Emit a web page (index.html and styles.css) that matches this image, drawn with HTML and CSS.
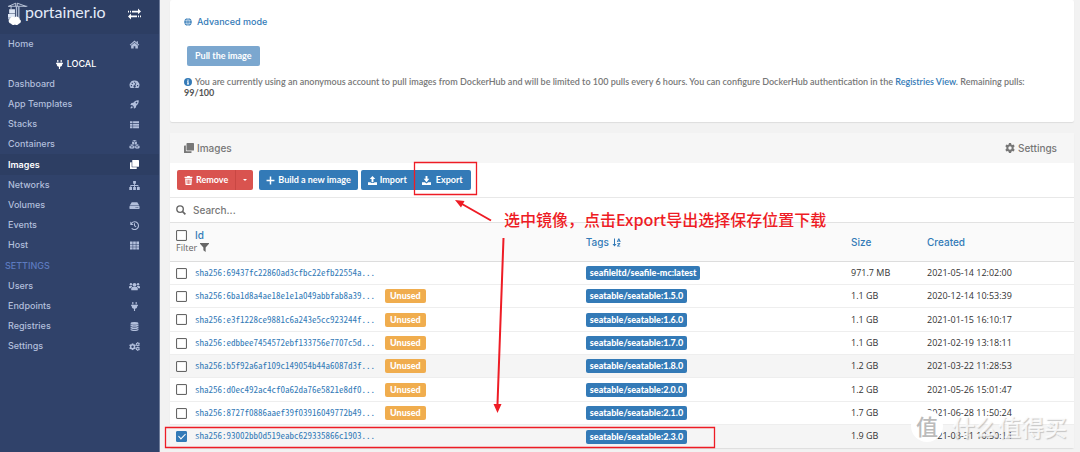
FILE: index.html
```html
<!DOCTYPE html>
<html lang="en">
<head>
<meta charset="utf-8">
<title>Portainer - Images</title>
<link rel="stylesheet" href="styles.css">
</head>
<body>
<svg class="sprite" aria-hidden="true">
  <symbol id="home" viewBox="0 0 18 16"><path d="M9 1 0.5 8.3l1.2 1.3L9 3.4l7.3 6.2 1.2-1.3L15 6.100V2h-2.200v2.300z"/><path d="M9 4.700 3 9.800V15h4.500v-4h3v4H15V9.800z"/></symbol>
  <symbol id="plug" viewBox="0 0 16 16"><path d="M4 0h2v4H4zM10 0h2v4h-2zM2 5h12v2h-1c0 3-1.500 4.600-4 5v4H7v-4C4.500 11.600 3 10 3 7H2z"/></symbol>
  <symbol id="gauge" viewBox="0 0 18 16"><path fill-rule="evenodd" d="M9 1a8 8 0 0 0-7 13h14A8 8 0 0 0 9 1zM8 3h2v2H8zM4 5h2v2H4zM2.500 9h2v2h-2zM13.500 9h2v2h-2zM11 4.500l1.300.500-1.800 5a2 2 0 1 1-1.400-.500z"/></symbol>
  <symbol id="rocket" viewBox="0 0 16 16"><path fill-rule="evenodd" d="M15.500.500C11 0 8 2 6 5L2.500 5.500.500 9l4 .500 2 2 .500 4 3.500-2L11 10c3-2 5-5 4.500-9.500zM11.500 3a1.500 1.500 0 1 1 0 3 1.500 1.500 0 0 1 0-3zM3.500 11C1.500 11.500 1 13 1 15c2 0 3.500-.500 4-2.500z"/></symbol>
  <symbol id="list" viewBox="0 0 16 16"><path d="M0 2h4.500v3.500H0zM5.500 2H16v3.500H5.500zM0 6.500h4.500V10H0zM5.500 6.500H16V10H5.500zM0 11h4.500v3.500H0zM5.500 11H16v3.500H5.500z"/></symbol>
  <symbol id="cubes" viewBox="0 0 18 16"><path d="M9 0 5 1.500 9 3l4-1.500zM4.700 2.500v4L8.500 8V4zM13.300 2.500v4L9.500 8V4zM4.500 7.500.500 9l4 1.600 4-1.600zM13.500 7.500l-4 1.500 4 1.600 4-1.600zM0 10v4l4 2v-4.400zM9 10v4l-4 2v-4.400zM10 10.500V14l3 2v-4.400zM18 10v4l-4 2v-4.400z"/></symbol>
  <symbol id="clone" viewBox="0 0 16 16"><path d="M5 0h10a1 1 0 0 1 1 1v10a1 1 0 0 1-1 1H5a1 1 0 0 1-1-1V1a1 1 0 0 1 1-1z"/><path d="M1 4h2v8a1 1 0 0 0 1 1h8v2a1 1 0 0 1-1 1H1a1 1 0 0 1-1-1V5a1 1 0 0 1 1-1z"/></symbol>
  <symbol id="sitemap" viewBox="0 0 20 16"><path d="M7.500 0h5v5h-1.700v2.200H17v3.300h2.500V16h-5v-5.500H16V8.700h-5.200v1.800h1.700V16h-5v-5.500h1.700V8.700H4v1.800h1.500V16h-5v-5.500h2V7.200h6.700V5H7.500z"/></symbol>
  <symbol id="drive" viewBox="0 0 18 16"><path d="M4 2h10l3.500 6H.500z"/><path fill-rule="evenodd" d="M1 8.700h16a1 1 0 0 1 1 1V13a1 1 0 0 1-1 1H1a1 1 0 0 1-1-1V9.700a1 1 0 0 1 1-1zM11 10.500v1.700h1.700v-1.700zM14 10.500v1.700h1.700v-1.700z"/></symbol>
  <symbol id="history" viewBox="0 0 16 16"><path d="M3 3.500A7 7 0 1 1 3 13" fill="none" stroke="currentColor" stroke-width="2"/><path d="M.500 1v6h6z"/><path d="M8 4v4.500l3 2" fill="none" stroke="currentColor" stroke-width="1.800"/></symbol>
  <symbol id="grid" viewBox="0 0 16 16"><path d="M0 1h4.700v4.200H0zM5.600 1h4.700v4.200H5.600zM11.300 1H16v4.200h-4.700zM0 6h4.700v4.200H0zM5.600 6h4.700v4.200H5.600zM11.300 6H16v4.200h-4.700zM0 11h4.700v4.200H0zM5.600 11h4.700v4.200H5.600zM11.300 11H16v4.200h-4.700z"/></symbol>
  <symbol id="users" viewBox="0 0 20 16"><circle cx="10" cy="5" r="3.500"/><circle cx="3.500" cy="4" r="2.200"/><circle cx="16.500" cy="4" r="2.200"/><path d="M4 14v-2c0-2 1.500-3 3-3h6c1.500 0 3 1 3 3v2q0 1-1 1H5q-1 0-1-1zM0 10V8.500C0 7.500 1 7 2 7h3l1 1.300Q3.500 9 3.200 11H0zM20 10V8.500c0-1-1-1.500-2-1.500h-3l-1 1.300q2.500.700 2.800 2.700H20z"/></symbol>
  <symbol id="database" viewBox="0 0 16 16"><ellipse cx="8" cy="2.500" rx="7" ry="2.500"/><path d="M1 4c3 2.300 11 2.300 14 0v3c-3 2-11 2-14 0zM1 8c3 2.300 11 2.300 14 0v3c-3 2-11 2-14 0zM1 12c3 2.300 11 2.300 14 0v2c-3 2.700-11 2.700-14 0z"/></symbol>
  <symbol id="cog" viewBox="0 0 16 16"><path fill-rule="evenodd" d="M6.300 0h3.400l.4 2.200 1.600.900 2.100-.800 1.700 2.900-1.700 1.500v2.600l1.700 1.500-1.700 2.900-2.100-.800-1.600.900-.4 2.200H6.300l-.4-2.200-1.600-.900-2.100.800L.5 10.800l1.700-1.500V6.700L.5 5.200l1.700-2.900 2.100.800 1.600-.9zM8 5.300a2.700 2.700 0 1 0 0 5.400 2.700 2.700 0 0 0 0-5.400z"/></symbol>
  <symbol id="cogs" viewBox="0 0 20 16"><use href="#cog" x="0" y="2" width="13" height="13"/><use href="#cog" x="12" y="0" width="8" height="8"/><use href="#cog" x="12" y="8" width="8" height="8"/></symbol>
  <symbol id="globe" viewBox="0 0 16 16"><circle cx="8" cy="8" r="7.500"/><path d="M.500 5.300h15M.500 10.700h15M8 0v16M8 .500c-4.700 3.500-4.700 11.500 0 15M8 .500c4.700 3.500 4.700 11.500 0 15" fill="none" stroke="#fff" stroke-width=".9"/></symbol>
  <symbol id="info" viewBox="0 0 16 16"><path fill-rule="evenodd" d="M8 0a8 8 0 1 0 0 16A8 8 0 0 0 8 0zM6.800 3h2.400v2.300H6.800zM6 6.500h3.200V11H10v1.800H6V11h.8V8.200H6z"/></symbol>
  <symbol id="trash" viewBox="0 0 16 16"><path fill-rule="evenodd" d="M1 1.500h4L6 0h4l1 1.500h4v2H1zM2 4.500h12L13.200 16H2.800zM4.600 6.500l.4 7.500h1.200V6.500zM7.400 6.500V14h1.200V6.500zM9.800 6.500V14H11l.4-7.500z"/></symbol>
  <symbol id="plus" viewBox="0 0 16 16"><path d="M6.700 1h2.600v5.700H15v2.600H9.300V15H6.700V9.300H1V6.700h5.700z"/></symbol>
  <symbol id="upload" viewBox="0 0 16 16"><path d="M8 0l5 5.500h-3.300V11H6.300V5.500H3zM0 11h5v1.500h6V11h5v5H0z"/></symbol>
  <symbol id="download" viewBox="0 0 16 16"><path d="M6.300 0h3.400v5H13l-5 6-5-6h3.300zM0 11h5l3 2.500 3-2.500h5v5H0z"/></symbol>
  <symbol id="search" viewBox="0 0 16 16"><circle cx="6.500" cy="6.500" r="5.200" fill="none" stroke="currentColor" stroke-width="2.200"/><path d="M10 10l5 5" stroke="currentColor" stroke-width="2.800"/></symbol>
  <symbol id="filter" viewBox="0 0 16 16"><path d="M0 0h16v1.500L10 8v8l-4-3V8L0 1.500z"/></symbol>
  <symbol id="sort" viewBox="0 0 18 16"><path d="M4 0h2v11h3l-4 5-4-5h3zM12.500 0h2.200L17.500 7h-2l-.4-1.200h-3L11.700 7h-2zM13.600 2.300l-.7 2h1.400zM10.500 9h6v1.600L13 14.300h3.500V16h-6.300v-1.600L13.800 10.600h-3.300z"/></symbol>
</svg>
<div class="app">
  <aside class="sidebar">
    <header class="brand">
      <svg class="logo" viewBox="0 0 22 28" aria-hidden="true"><path d="M0 4h25M10 4V0M12 4V0M1 4 10 0M12 0l11 4" fill="none" stroke="#dfe8f6" stroke-width="1"/><path d="M11 4v16M14 4v16" stroke="#aebbd3" stroke-width="1.800"/><path d="M4 4v4" stroke="#dfe8f6"/><path d="M1.500 8H9v5.500H1.500zM0 14h9v5H0z" fill="#dfe8f6"/><path d="M0 19h15v2H0z" fill="#aebbd3"/><path d="M4 26.500a3.500 3.500 0 0 1-1.500-6.500 4 4 0 0 1 6-1.700 4 4 0 0 1 6.500 2.500 3 3 0 0 1-1 5.700 3.500 3.500 0 0 1-5 1A3.500 3.500 0 0 1 4 26.500z" fill="#fff"/></svg>
      <span class="brand-name">portainer.io</span>
      <button class="toggle" aria-label="Toggle sidebar"><svg viewBox="0 0 13 12"><path d="M4 2.700h6V.500L13 3.500 10 6.300V4.500H4zM0 2.700h1v1.800H0zM2 2.700h1v1.800H2zM9 7.500H3V5.500L0 8.500 3 11.500V9.300h6zM10 7.500h1v1.800h-1zM12 7.500h1v1.800h-1z"/></svg></button>
    </header>
    <nav class="menu">
      <a href="#">Home<svg><use href="#home"/></svg></a>
      <div class="endpoint"><svg><use href="#plug"/></svg>LOCAL</div>
      <a href="#">Dashboard<svg><use href="#gauge"/></svg></a>
      <a href="#">App Templates<svg><use href="#rocket"/></svg></a>
      <a href="#">Stacks<svg><use href="#list"/></svg></a>
      <a href="#">Containers<svg><use href="#cubes"/></svg></a>
      <a href="#" class="active">Images<svg><use href="#clone"/></svg></a>
      <a href="#">Networks<svg><use href="#sitemap"/></svg></a>
      <a href="#">Volumes<svg><use href="#drive"/></svg></a>
      <a href="#">Events<svg><use href="#history"/></svg></a>
      <a href="#">Host<svg><use href="#grid"/></svg></a>
      <div class="group">SETTINGS</div>
      <a href="#">Users<svg><use href="#users"/></svg></a>
      <a href="#">Endpoints<svg><use href="#plug"/></svg></a>
      <a href="#">Registries<svg><use href="#database"/></svg></a>
      <a href="#">Settings<svg><use href="#cogs"/></svg></a>
    </nav>
  </aside>
  <main class="content">
    <section class="card pull">
      <a class="advanced" href="#"><svg><use href="#globe"/></svg>Advanced mode</a>
      <button class="btn btn-pull" disabled>Pull the image</button>
      <p class="notice"><svg><use href="#info"/></svg>You are currently using an anonymous account to pull images from DockerHub and will be limited to 100 pulls every 6 hours. You can configure DockerHub authentication in the <a href="#">Registries View</a>. Remaining pulls: <b>99/100</b></p>
    </section>
    <section class="card images">
      <header class="card-head">
        <h2><svg><use href="#clone"/></svg>Images</h2>
        <button class="settings"><svg><use href="#cog"/></svg>Settings</button>
      </header>
      <div class="toolbar">
        <div class="btn-group">
          <button class="btn danger"><svg><use href="#trash"/></svg>Remove</button>
          <button class="btn danger caret" aria-label="More remove options"></button>
        </div>
        <button class="btn"><svg><use href="#plus"/></svg>Build a new image</button>
        <div class="btn-group">
          <button class="btn"><svg><use href="#upload"/></svg>Import</button>
          <button class="btn export"><svg><use href="#download"/></svg>Export</button>
        </div>
      </div>
      <label class="search"><svg><use href="#search"/></svg><input type="text" placeholder="Search..." aria-label="Search"></label>
      <table>
        <colgroup><col class="c-id"><col class="c-tags"><col class="c-size"><col class="c-created"></colgroup>
        <thead>
          <tr>
            <th><div class="cell"><input type="checkbox" id="all" aria-label="Select all"><a href="#">Id</a></div><div class="filter">Filter<svg><use href="#filter"/></svg></div></th>
            <th><a href="#">Tags<svg><use href="#sort"/></svg></a></th>
            <th><a href="#">Size</a></th>
            <th><a href="#">Created</a></th>
          </tr>
        </thead>
        <tbody>
          <tr><td><div class="cell"><input type="checkbox" aria-label="Select image"><a class="sha" href="#">sha256:69437fc22860ad3cfbc22efb22554a...</a></div></td><td><span class="tag">seafileltd/seafile-mc:latest</span></td><td>971.7 MB</td><td>2021-05-14 12:02:00</td></tr>
          <tr><td><div class="cell"><input type="checkbox" aria-label="Select image"><a class="sha" href="#">sha256:6ba1d8a4ae18e1e1a049abbfab8a39...</a><span class="unused">Unused</span></div></td><td><span class="tag">seatable/seatable:1.5.0</span></td><td>1.1 GB</td><td>2020-12-14 10:53:39</td></tr>
          <tr><td><div class="cell"><input type="checkbox" aria-label="Select image"><a class="sha" href="#">sha256:e3f1228ce9881c6a243e5cc923244f...</a><span class="unused">Unused</span></div></td><td><span class="tag">seatable/seatable:1.6.0</span></td><td>1.1 GB</td><td>2021-01-15 16:10:17</td></tr>
          <tr><td><div class="cell"><input type="checkbox" aria-label="Select image"><a class="sha" href="#">sha256:edbbee7454572ebf133756e7707c5d...</a><span class="unused">Unused</span></div></td><td><span class="tag">seatable/seatable:1.7.0</span></td><td>1.1 GB</td><td>2021-02-19 13:18:11</td></tr>
          <tr class="shade"><td><div class="cell"><input type="checkbox" aria-label="Select image"><a class="sha" href="#">sha256:b5f92a6af109c149054b44a6087d3f...</a><span class="unused">Unused</span></div></td><td><span class="tag">seatable/seatable:1.8.0</span></td><td>1.2 GB</td><td>2021-03-22 11:28:53</td></tr>
          <tr><td><div class="cell"><input type="checkbox" aria-label="Select image"><a class="sha" href="#">sha256:d0ec492ac4cf0a62da76e5821e8df0...</a><span class="unused">Unused</span></div></td><td><span class="tag">seatable/seatable:2.0.0</span></td><td>1.2 GB</td><td>2021-05-26 15:01:47</td></tr>
          <tr><td><div class="cell"><input type="checkbox" aria-label="Select image"><a class="sha" href="#">sha256:8727f0886aaef39f03916049772b49...</a><span class="unused">Unused</span></div></td><td><span class="tag">seatable/seatable:2.1.0</span></td><td>1.7 GB</td><td>2021-06-28 11:50:24</td></tr>
          <tr class="shade"><td><div class="cell"><input type="checkbox" aria-label="Select image" checked><a class="sha" href="#">sha256:93002bb0d519eabc629335866c1903...</a></div></td><td><span class="tag">seatable/seatable:2.3.0</span></td><td>1.9 GB</td><td>2021-08-31 10:50:14</td></tr>
        </tbody>
      </table>
    </section>
  </main>
  <svg class="marks" viewBox="0 0 1080 452" aria-hidden="true">
    <g fill="none" stroke="#ee1c25"><path d="M414.500 162.500h62v32h-62zM165.500 427.500h549v20h-549z" stroke-width="1.300"/><path d="M491 220.500 462 204M503.500 238 497.500 404" stroke-width="2"/></g>
    <path d="M455 200l9.500 1-3.500 6.500zM497.500 413l-4-9h8z" fill="#ee1c25"/>
  </svg>
  <p class="callout">选中镜像，点击Export导出选择保存位置下载</p>
  <div class="watermark"><span class="seal">值</span>什么值得买</div>
</div>
</body>
</html>
```
FILE: styles.css
```css
* { box-sizing: border-box; }
body { margin: 0; background: #f2f2f2; color: #666; font: 500 9px/14px "Open Sans", "Noto Sans", sans-serif; }
.sprite { position: absolute; width: 0; height: 0; }
svg { fill: currentColor; flex: none; }
a { color: #337ab7; text-decoration: none; }
button, input { font: inherit; }
.app { position: relative; display: flex; min-height: 100vh; overflow: hidden; }

.sidebar { flex: none; width: 160px; background: #30426a; border-right: 1px solid #6e7c9b; font-family: Inter, sans-serif; }
.brand { display: flex; align-items: flex-start; height: 34px; padding-left: 8px; background: #2d3e63; color: #e4ebf8; }
.logo { width: 17px; height: 28px; overflow: visible; }
.brand-name { flex: 1; font: 400 16px/23px Lato, sans-serif; }
.toggle { display: flex; margin: 8px 18px 0 0; padding: 0; border: 0; background: none; color: #fff; }
.toggle svg { width: 13px; height: 12px; }
.menu a { display: flex; align-items: center; justify-content: space-between; height: 20px; padding: 0 19px 0 8px; color: #b2bfdc; }
.menu svg { width: 11px; height: 9px; }
.menu .active { height: 21px; background: #2d3e63; color: #fff; font-weight: 600; }
.endpoint { display: flex; align-items: center; justify-content: center; gap: 2px; height: 20px; padding-right: 9px; color: #fff; }
.group { height: 21px; padding-left: 5px; color: #5d7bc0; line-height: 21px; }

.content { flex: 1; min-width: 0; padding: 0 6px 0 10px; }
.card { background: #fff; border-radius: 2px; box-shadow: 0 1px 1px #ddd; }
.pull { margin-bottom: 11px; padding: 15px 26px 24px 14px; }
.advanced { display: flex; align-items: center; gap: 5px; font-family: Inter, sans-serif; }
.advanced svg, .notice svg { width: 8px; height: 8px; }
.btn { display: flex; align-items: center; justify-content: center; gap: 3px; height: 20px; padding: 0 7px; border: 0; border-radius: 2px; background: #337ab7; color: #fff; font: 700 9px/14px Lato, sans-serif; white-space: nowrap; }
.btn svg { width: 9px; height: 9px; }
.btn-pull { margin: 17px 0 10px 3px; padding: 0 8px; background: #7ba7cf; }
.notice { margin: 0; color: #777; font: 600 9px/11px Lato, sans-serif; }
.notice svg { margin-right: 3px; color: #337ab7; vertical-align: -1px; }
.notice b { color: #555; font-weight: 700; }
.card-head { display: flex; align-items: center; justify-content: space-between; height: 30px; padding: 0 17px 0 14px; background: #f6f6f6; color: #777; }
.card-head h2, .settings { display: flex; align-items: center; gap: 3px; margin: 0; padding: 0; border: 0; background: none; color: inherit; font: 500 10px/14px Inter, sans-serif; }
.card-head svg { width: 10px; height: 10px; }
.toolbar { display: flex; gap: 6px; padding: 7px; }
.toolbar > .btn-group:last-child { margin-left: -3px; }
.btn-group { display: flex; }
.btn-group .btn:first-child { border-radius: 2px 0 0 2px; }
.btn-group .btn:last-child { border-radius: 0 2px 2px 0; }
.danger { background: #d9534f; }
.btn.caret { width: 18px; padding: 0; border-left: 1px solid #c94743; }
.btn.export { gap: 5px; padding: 0 8px; }
.caret::after { content: ""; border: 2px solid transparent; border-top-color: #fff; border-bottom: 0; }
.search { display: flex; align-items: center; gap: 7px; height: 25px; padding-left: 6px; border-top: 1px solid #e8e8e8; }
.search svg { width: 10px; height: 10px; }
.search input { flex: 1; min-width: 0; padding: 0; border: 0; outline: 0; color: #555; font: 500 10px/14px Inter, sans-serif; }
.search input::placeholder { color: #777; }

table { width: 100%; border-collapse: collapse; table-layout: fixed; }
.c-id { width: 46%; }
.c-size { width: 76px; }
.c-created { width: 147px; }
th { height: 39px; padding: 0; background: #fafafa; border-top: 1px solid #e2e2e2; border-bottom: 1px solid #ddd; font: 500 10px/14px Inter, sans-serif; text-align: left; }
th svg { width: 9px; height: 9px; margin-left: 3px; vertical-align: -1px; }
.filter { padding: 0 0 2px 6px; font: 500 9px/12px "Open Sans", sans-serif; }
.cell { display: flex; align-items: center; padding-left: 6px; }
.cell input { flex: none; width: 11px; height: 11px; margin: 0 8px 0 0; appearance: none; border: 1px solid #666; border-radius: 1px; background: #fff; box-shadow: inset 0 0 1px #777; }
.cell input:checked { display: grid; place-items: center; border-color: #337ab7; background: #337ab7; box-shadow: none; }
.cell input:checked::after { content: ""; width: 3px; height: 6px; margin-bottom: 2px; border: solid #fff; border-width: 0 1px 1px 0; rotate: 45deg; }
td { height: 23px; padding: 0; border-top: 1px solid #eee; color: #333; }
tr:nth-child(3n) td { height: 24px; }
.shade { background: #f5f5f5; }
.sha { width: 180px; font: 500 9px/12px "Noto Sans Mono CJK SC", "Liberation Mono", monospace; }
.tag, .unused { display: inline-block; height: 14px; padding: 0 4px; border-radius: 2px; background: #337ab7; color: #fff; font: 900 9px/13px Lato, sans-serif; vertical-align: middle; }
.unused { margin-left: 10px; padding: 0 5px; background: #f0ad4e; }

/* Annotations drawn over the interface */
.marks { position: absolute; top: 0; left: 0; width: 1080px; height: 452px; pointer-events: none; }
.callout { position: absolute; top: 209px; left: 504px; margin: 0; color: #ee1c25; font: 500 16px/20px "Noto Sans CJK SC", sans-serif; }
.watermark { position: absolute; top: 410px; left: 911px; display: flex; align-items: center; gap: 9px; color: #fffc; font: 500 23px/32px "Noto Sans CJK SC", sans-serif; text-shadow: 1px 1px 1px #9998; }
.seal { width: 32px; height: 32px; border-radius: 50%; background: #fff; color: #bbb; font-size: 22px; line-height: 30px; text-align: center; text-shadow: none; }
```
